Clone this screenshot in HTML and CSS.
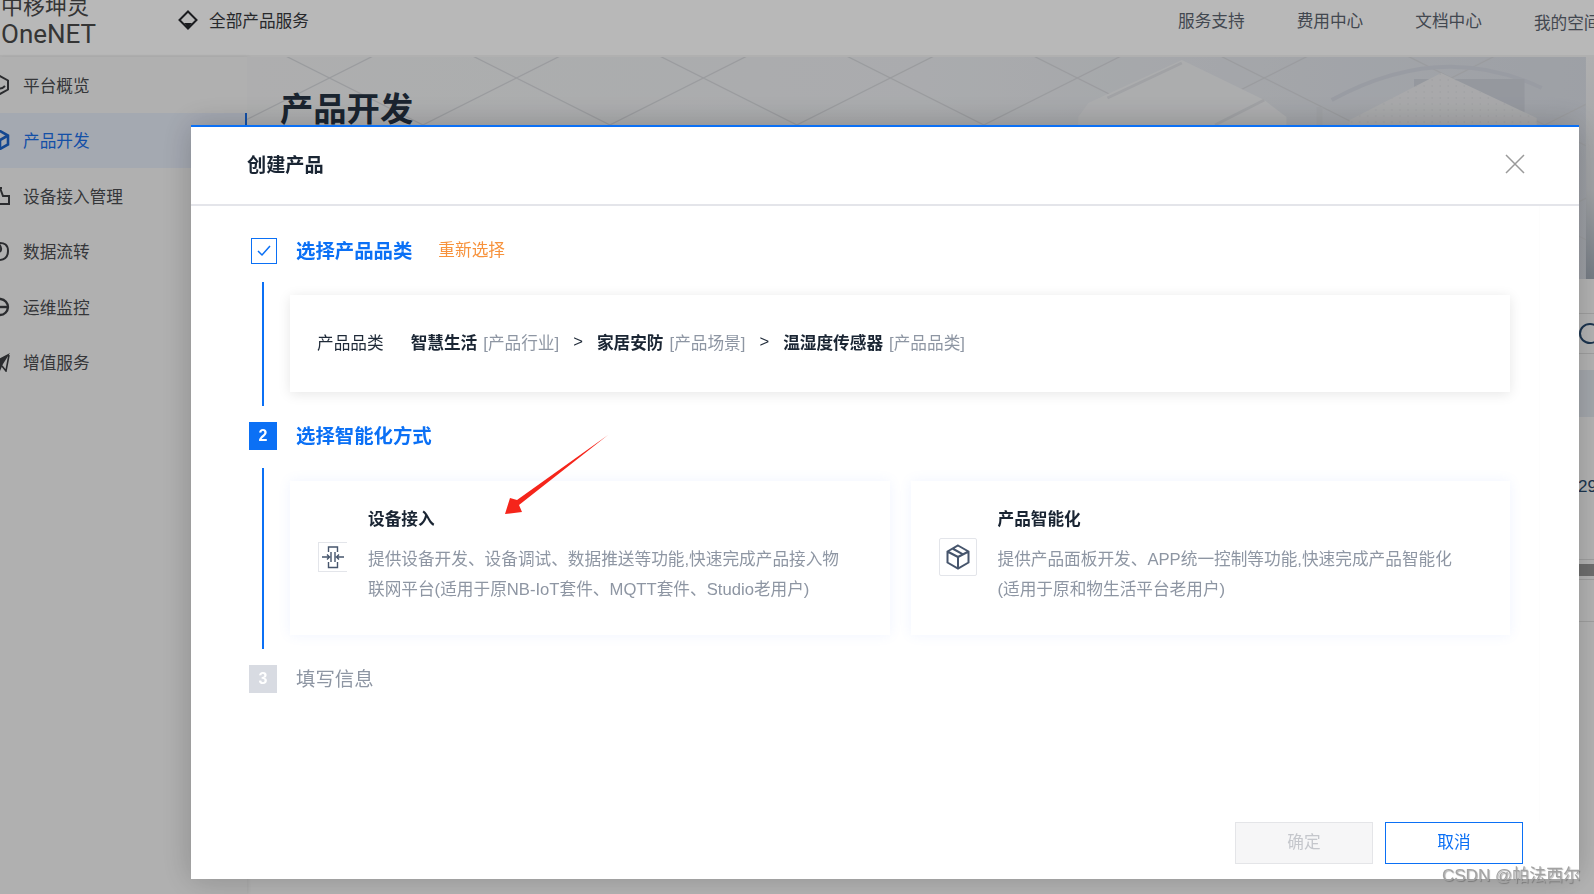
FILE: index.html
```html
<!DOCTYPE html>
<html lang="zh-CN">
<head>
  <meta charset="utf-8">
  <title>创建产品</title>
  <link rel="stylesheet" href="styles.css">
</head>
<body>

  <header class="topbar">
    <div class="topbar-left">
      <div class="logo">
        <div class="logo-cn">中移坤灵</div>
        <div class="logo-en">OneNET</div>
      </div>
      <div class="all-products">
        <svg width="20" height="20" viewBox="0 0 20 20"><path d="M10 1.500 18.500 10 10 18.500 1.500 10Z" fill="none" stroke="#26282c" stroke-width="2"/><path d="M6 13h8l-4 5Z" fill="#26282c"/></svg>
        全部产品服务
      </div>
    </div>
    <nav class="topnav">
      <a>服务支持</a>
      <a>费用中心</a>
      <a>文档中心</a>
      <a class="low">我的空间</a>
    </nav>
  </header>

  <div class="page">
    <aside class="sidebar">
      <div class="side-item">
        <svg width="20" height="20" viewBox="-10 -10 20 20"><path d="M0-9 8-4.500V4.500L0 9-8 4.500V-4.500Z" fill="none" stroke="#3c3e42" stroke-width="2"/><path d="M-4 1Q0 6 5 1" fill="none" stroke="#3c3e42" stroke-width="2"/></svg>
        平台概览
      </div>
      <div class="side-item active">
        <svg width="20" height="20" viewBox="-10 -10 20 20"><path d="M0-9 8-4.500V4.500L0 9-8 4.500V-4.500Z" fill="none" stroke="#1b63c9" stroke-width="2.600"/><path d="M0 0 8-4.500M0 0V9" stroke="#1b63c9" stroke-width="2.600"/></svg>
        产品开发
      </div>
      <div class="side-item">
        <svg width="20" height="20" viewBox="-10 -10 20 20"><path d="M-6-8H2M0-8 3 0H9V8H-9" fill="none" stroke="#3c3e42" stroke-width="2"/></svg>
        设备接入管理
      </div>
      <div class="side-item">
        <svg width="20" height="20" viewBox="-10 -10 20 20"><path d="M-2-8Q8-9 8 0 8 8 0 9" fill="none" stroke="#3c3e42" stroke-width="2"/><path d="M-2-8Q3-3 0 1" fill="none" stroke="#3c3e42" stroke-width="2"/></svg>
        数据流转
      </div>
      <div class="side-item">
        <svg width="20" height="20" viewBox="-10 -10 20 20"><path d="M-8-1A8 8 0 1 1 0 8" fill="none" stroke="#3c3e42" stroke-width="2.400"/><path d="M-8 0H9" stroke="#3c3e42" stroke-width="2.400"/></svg>
        运维监控
      </div>
      <div class="side-item">
        <svg width="20" height="20" viewBox="-10 -10 20 20"><path d="M10-9-9 1-2 3 0 9 3 2Z" fill="#3c3e42"/><path d="M9-7 6 9 2 4" fill="none" stroke="#3c3e42" stroke-width="1.600"/></svg>
        增值服务
      </div>
    </aside>

    <main class="content">
      <section class="hero">
        <svg class="hero-art" viewBox="247 57 1347 222" preserveAspectRatio="none">
          <defs>
            <linearGradient id="heroBg" x1="0" y1="0" x2="1" y2="0">
              <stop offset="0" stop-color="#f1f2f3"/>
              <stop offset="0.5" stop-color="#eceef1"/>
              <stop offset="1" stop-color="#dadee6"/>
            </linearGradient>
            <linearGradient id="heroEdge" x1="0" y1="0" x2="0" y2="1">
              <stop offset="0" stop-color="#f3f3f4"/>
              <stop offset="0.6" stop-color="#dfe2e6"/>
              <stop offset="1" stop-color="#a6afba"/>
            </linearGradient>
            <pattern id="tiles" patternUnits="userSpaceOnUse" x="422" y="31" width="186" height="94">
              <path d="M0 0 186 94M0 94 186 0" stroke="#d6d8dc" stroke-width="1.200"/>
            </pattern>
            <pattern id="dots" patternUnits="userSpaceOnUse" width="8" height="6">
              <circle cx="2" cy="2" r="0.800" fill="#dcdee2"/>
            </pattern>
          </defs>
          <rect x="247" y="57" width="1347" height="222" fill="url(#heroBg)"/>
          <rect x="247" y="57" width="1347" height="222" fill="url(#tiles)"/>
          <rect x="1579" y="57" width="15" height="222" fill="url(#heroEdge)"/>
          <polygon points="1177,60 1259,100 1281,117 1281,127 1074,127 1074,117 1084,103" fill="#eff0f2"/>
          <path d="M1177 63 1103 98M1259 100 1210 125" stroke="#dfe1e5" stroke-width="3" fill="none"/>
          <path d="M1326 100Q1435 40 1535 88" stroke="#d5d9e2" stroke-width="4" fill="none"/>
          <rect x="1408" y="79" width="110" height="48" fill="#cfd3dc"/>
          <polygon points="1435,73 1530,118 1530,127 1344,127 1344,120" fill="#eaebed"/>
          <polygon points="1435,73 1530,118 1530,127 1344,127 1344,120" fill="url(#dots)"/>
          <rect x="1311" y="107" width="6" height="20" fill="#dde0e5"/>
        </svg>
        <h1 class="hero-title">产品开发</h1>
      </section>
      <div class="search-row"><span class="search-ring"></span></div>
      <div class="table-head"></div>
      <div class="table-row">29</div>
      <div class="table-scroll"><span class="scroll-thumb"></span></div>
      <div class="table-foot"></div>
    </main>
  </div>

  <div class="scrim"></div>

  <div class="modal">
    <div class="modal-head">
      <span class="modal-title">创建产品</span>
      <svg width="20" height="20" viewBox="0 0 20 20"><path d="M1 1 19 19M19 1 1 19" stroke="#9a9a9a" stroke-width="1.500"/></svg>
    </div>

    <div class="modal-body">
      <div class="step-head done">
        <span class="check-box">
          <svg width="16" height="14" viewBox="0 0 16 14"><path d="M2 7 6 11 14 2" fill="none" stroke="#0b70f5" stroke-width="1.500"/></svg>
        </span>
        <span class="step-name">选择产品品类</span>
        <a class="reselect">重新选择</a>
      </div>
      <div class="step-body">
        <div class="card summary">
          <span class="summary-label">产品品类</span>
          <b>智慧生活</b><span class="muted">[产品行业]</span>
          <span class="gt">&gt;</span>
          <b>家居安防</b><span class="muted">[产品场景]</span>
          <span class="gt">&gt;</span>
          <b>温湿度传感器</b><span class="muted">[产品品类]</span>
        </div>
      </div>

      <div class="step-head">
        <span class="step-num">2</span>
        <span class="step-name">选择智能化方式</span>
      </div>
      <div class="step-body">
        <div class="options">
          <div class="card option">
            <span class="opt-icon small">
              <svg width="28" height="28" viewBox="0 0 28 28"><path d="M9.500 9V4H18.500V9M9.500 19V24.500H18.500V19M12 9V19M16 9V19M3 14H10.500M8 11.500 10.500 14 8 16.500M25 14H17.500M20 11.500 17.500 14 20 16.500" fill="none" stroke="#46556c" stroke-width="1.400"/></svg>
            </span>
            <div>
              <div class="opt-title">设备接入</div>
              <p class="opt-desc">提供设备开发、设备调试、数据推送等功能,快速完成产品接入物<br>联网平台(适用于原NB-IoT套件、MQTT套件、Studio老用户)</p>
            </div>
          </div>
          <div class="card option">
            <span class="opt-icon">
              <svg width="26" height="26" viewBox="0 0 26 26"><path d="M13 1.500 23.500 7.500V18.500L13 24.500 2.500 18.500V7.500ZM2.500 7.500 13 13 23.500 7.500M13 13V24.500M7.500 4.500 18 10.300" fill="none" stroke="#46556c" stroke-width="2"/></svg>
            </span>
            <div>
              <div class="opt-title">产品智能化</div>
              <p class="opt-desc">提供产品面板开发、APP统一控制等功能,快速完成产品智能化<br>(适用于原和物生活平台老用户)</p>
            </div>
          </div>
        </div>
      </div>

      <div class="step-head todo">
        <span class="step-num">3</span>
        <span class="step-name">填写信息</span>
      </div>
    </div>

    <div class="modal-foot">
      <button class="btn disabled">确定</button>
      <button class="btn">取消</button>
    </div>
  </div>

  <svg class="arrow" width="115" height="90" viewBox="500 430 115 90"><polygon points="608,435 517,500 510,498 505,514 522,512 519,505" fill="#f5251b"/></svg>

  <div class="watermark">CSDN @帕法西尔</div>

</body>
</html>
```
FILE: styles.css
```css
* {
  box-sizing: border-box;
}

html, body {
  margin: 0;
  height: 100%;
  overflow: hidden;
}

body {
  width: 1594px;
  height: 894px;
  position: relative;
  background: #f9f9f9;
  font-family: "Liberation Sans", "Noto Sans CJK SC", sans-serif;
  font-size: 16.670px;
  color: #1f2a38;
}

/* Top bar */
.topbar {
  height: 57px;
  display: flex;
  background: #fff;
  border-bottom: 2px solid #f4f4f4;
  overflow: hidden;
}

.topbar-left {
  flex: 0 0 1178px;
  display: flex;
  align-items: center;
}

.logo {
  width: 178px;
  margin-top: -14px;
  padding-left: 1px;
  color: #4a4a4a;
}

.logo-cn {
  font-size: 22px;
  line-height: 26px;
}

.logo-en {
  font-size: 26px;
  line-height: 28px;
  font-family: Roboto, "Liberation Sans", sans-serif;
}

.all-products {
  display: flex;
  align-items: center;
  gap: 11px;
  margin-top: -15px;
  color: #36383c;
}

.topnav {
  display: flex;
  gap: 52px;
  flex: none;
  padding-top: 8px;
  color: #5c6470;
}

.topnav .low {
  margin-top: 2px;
}

/* Page behind the dialog */
.page {
  display: flex;
  height: 837px;
}

.sidebar {
  flex: 0 0 247px;
  background: #f4f4f4;
  box-shadow: 1px 0 4px rgba(0, 0, 0, 0.08);
}

.side-item {
  height: 55.500px;
  display: flex;
  align-items: center;
  gap: 13px;
  color: #4a4c50;
}

.side-item svg {
  margin-left: -10px;
}

.side-item.active {
  background: #e4eaf6;
  color: #1b6fe8;
  border-right: 2px solid #1b6fe8;
}

.content {
  flex: 1;
  display: flex;
  flex-direction: column;
}

.hero {
  height: 222px;
  position: relative;
  padding: 33px 0 0 33px;
}

.hero-art {
  position: absolute;
  inset: 0;
  width: 100%;
  height: 100%;
}

.hero-title {
  position: relative;
  margin: 0;
  font-size: 33.300px;
  line-height: 40px;
  font-weight: 700;
  color: #253242;
}

.search-row {
  margin-top: 34px;
  height: 41px;
  padding: 9px 0 0 1332px;
  border-top: 1px solid #dedede;
  border-bottom: 1px solid #dedede;
}

.search-ring {
  display: block;
  width: 22px;
  height: 21px;
  border: 2px solid #27496e;
  border-radius: 50%;
}

.table-head {
  margin-top: 16px;
  height: 47px;
  background: #e4e9f0;
}

.table-row {
  height: 143px;
  padding: 58px 0 0 1331px;
  font-size: 17px;
  line-height: 24px;
  color: #27496e;
  border-bottom: 1px solid #dedede;
}

.table-scroll {
  height: 20px;
  padding-top: 4px;
  border-bottom: 1px solid #dedede;
}

.scroll-thumb {
  display: block;
  height: 12px;
  background: #999;
}

.table-foot {
  height: 42px;
  border-bottom: 1px solid #dedede;
}

/* Dialog */
.scrim {
  position: fixed;
  inset: 0;
  background: rgba(0, 0, 0, 0.28);
}

.modal {
  position: fixed;
  left: 191px;
  top: 125px;
  width: 1388px;
  height: 754px;
  display: flex;
  flex-direction: column;
  background: #fff;
  border-top: 2px solid #0b70f5;
  box-shadow: 0 0 30px rgba(0, 0, 0, 0.22);
}

.modal-head {
  height: 79px;
  flex: none;
  display: flex;
  align-items: center;
  justify-content: space-between;
  padding: 0 54px 4px 56px;
  border-bottom: 2px solid #e4e5ea;
}

.modal-title {
  font-size: 19.200px;
  font-weight: 700;
  color: #1a2533;
}

.modal-body {
  flex: 1;
  width: 1349px;
  padding: 32px 29px 0 58px;
  border-right: 1px solid #fdfdfd;
}

.step-head {
  display: flex;
  align-items: center;
  height: 28px;
  gap: 19px;
}

.step-head.done {
  height: 26px;
  padding-left: 2px;
  gap: 19px;
}

.check-box {
  width: 26px;
  height: 26px;
  display: flex;
  align-items: center;
  justify-content: center;
  border: 1px solid #0b70f5;
}

.step-num {
  width: 28px;
  height: 28px;
  display: flex;
  align-items: center;
  justify-content: center;
  background: #0b70f5;
  color: #fff;
  font-size: 16px;
  font-weight: 700;
}

.step-name {
  margin-top: -4px;
  font-size: 19.400px;
  font-weight: 700;
  color: #0b70f5;
}

.reselect {
  margin: -4px 0 0 7px;
  color: #f7923c;
}

.todo .step-num {
  background: #d8dbe2;
}

.todo .step-name {
  font-weight: 400;
  color: #8e96a3;
}

.step-body {
  margin: 18px 0 16px 13px;
  padding: 13px 0 14px 26px;
  border-left: 2px solid #0b70f5;
}

.card {
  background: #fff;
  box-shadow: 0 2px 12px rgba(0, 0, 0, 0.1);
}

.summary {
  height: 97px;
  display: flex;
  align-items: center;
  padding: 0 0 4px 27px;
}

.summary-label {
  margin-right: 27px;
}

.summary b {
  margin-right: 6px;
  color: #1a2533;
}

.muted {
  color: #8e96a3;
}

.gt {
  margin: 0 14px;
}

.options {
  display: flex;
  gap: 21px;
}

.option {
  flex: 1;
  height: 154px;
  display: flex;
  align-items: center;
  padding: 0 0 2px 28px;
  box-shadow: 0 0 12px rgba(90, 130, 255, 0.09);
}

.opt-icon {
  flex: none;
  width: 38px;
  height: 38px;
  display: flex;
  align-items: center;
  justify-content: center;
  margin: 0 21px 0 0;
  border: 1px solid #e3e5ea;
  border-radius: 2px;
}

.opt-icon.small {
  width: 29px;
  height: 30px;
  margin: 0 21px 0 0;
  border-right: none;
  border-radius: 0;
}

.opt-title {
  margin-top: -2px;
  font-weight: 700;
  line-height: 26px;
  color: #1a2533;
}

.opt-desc {
  margin: 12px 0 0;
  line-height: 30.500px;
  color: #8e96a3;
  white-space: nowrap;
}

.modal-foot {
  flex: none;
  display: flex;
  justify-content: flex-end;
  gap: 12px;
  padding: 0 56px 15px 0;
}

.btn {
  width: 138px;
  height: 42px;
  padding: 0 0 4px;
  background: #fff;
  border: 1px solid #0b70f5;
  color: #0b70f5;
  font: inherit;
}

.btn.disabled {
  background: #f6f6f7;
  border-color: #e4e5e8;
  color: #c5c7cc;
}

/* Annotations pasted on the screenshot */
.arrow {
  position: fixed;
  left: 500px;
  top: 430px;
}

.watermark {
  position: fixed;
  left: 1442px;
  top: 865px;
  font-size: 17px;
  line-height: 22px;
  white-space: nowrap;
  color: #a2a2a2;
  text-shadow: 1px 1px 1px rgba(60, 60, 60, 0.4);
}
```
